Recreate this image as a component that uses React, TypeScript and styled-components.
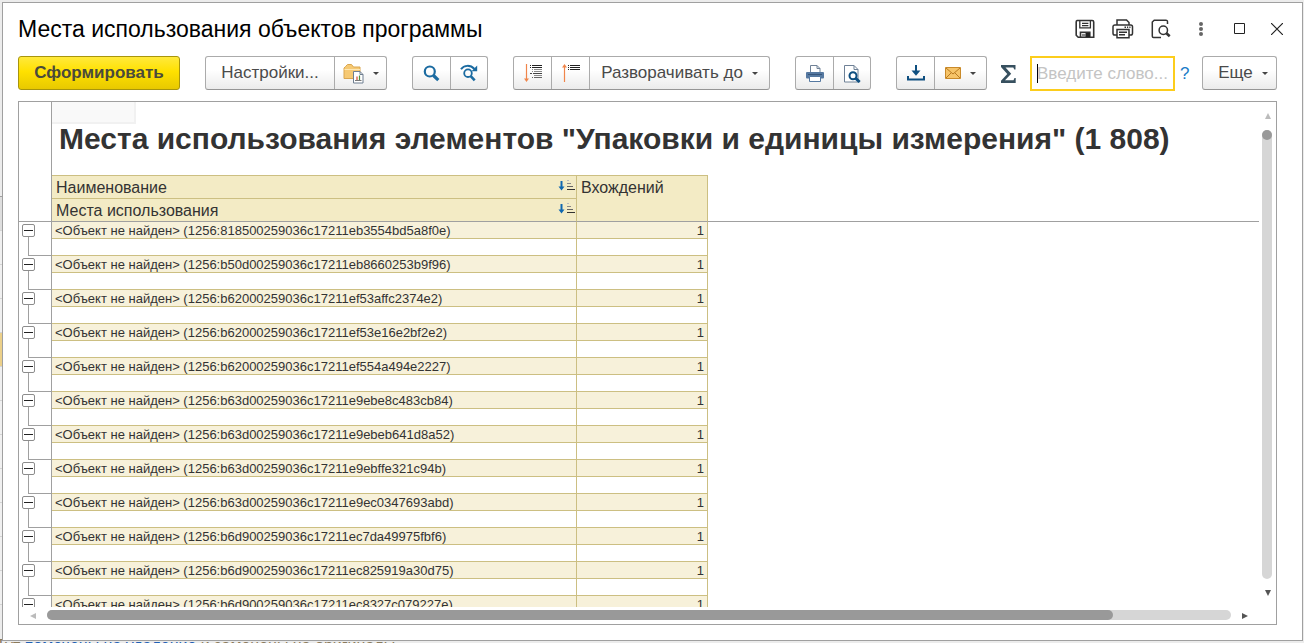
import React from "react";
import styled, { createGlobalStyle, css } from "styled-components";

const LINE = "#a0a0a0";
const GOLD = "#ccbf82";

const GlobalStyle = createGlobalStyle`
  * { box-sizing: border-box; }
  body {
    margin: 0;
    background: #ececec;
    color: #333;
    font-family: "Liberation Sans", Arial, sans-serif;
  }
  button, input { font: inherit; color: inherit; margin: 0; }
`;

/* ---------- page behind the dialog ---------- */

const Page = styled.div`
  position: relative;
  height: 100vh;
  min-height: 320px;
  display: flex;
  padding: 2px 1px 2px 2px;
  overflow: hidden;
`;

const Backdrop = styled.div`
  position: absolute;
  inset: 0;
  display: flex;
  flex-direction: column;
  overflow: hidden;
`;

const BackHead = styled.div`
  flex: none;
  width: 50%;
  height: 197px;
  border-bottom: 1px solid ${LINE};
`;

const BackRow = styled.div<{ $tone?: string }>`
  flex: none;
  width: 50%;
  height: 34px;
  border-bottom: 1px solid #d4d4d4;
  background: ${(p) => p.$tone ?? "#f0f0f0"};
`;

const BackNote = styled.p`
  position: absolute;
  left: -4px;
  bottom: -13px;
  margin: 0;
  font-size: 16px;
  line-height: 20px;
  white-space: nowrap;
  color: #8a7a5c;
`;

const BackLink = styled.span`
  color: #1f5fb4;
`;

/* ---------- dialog ---------- */

const Dialog = styled.section`
  position: relative;
  flex: 1;
  min-width: 0;
  display: flex;
  flex-direction: column;
  padding-bottom: 15px;
  background: #fff;
  border: 1px solid ${LINE};
`;

const TitleBar = styled.header`
  display: flex;
  align-items: center;
  height: 53px;
  padding: 0 6px 2px 15px;
`;

const Title = styled.h1`
  flex: 1;
  margin: 0;
  font-size: 23px;
  line-height: 28px;
  font-weight: 400;
  color: #000;
  white-space: nowrap;
`;

const WindowTools = styled.div`
  display: flex;
  gap: 2px;
`;

const ToolSet = styled.div`
  display: flex;
`;

const WindowButton = styled.button`
  width: 38px;
  height: 32px;
  display: flex;
  align-items: center;
  justify-content: center;
  padding: 0;
  border: 0;
  background: none;
`;

const Toolbar = styled.div`
  display: flex;
  align-items: flex-start;
  gap: 25px;
  height: 35px;
  padding: 0 25px 0 15px;
  font-size: 17px;
  color: #4a4a4a;

  > * { flex-shrink: 0; }
`;

const buttonFace = css`
  height: 34px;
  border: 1px solid #ababab;
  border-bottom-color: #959595;
  border-radius: 3px;
  background: linear-gradient(#fff 0%, #fff 40%, #ebebeb 100%);
`;

const RunButton = styled.button`
  width: 162px;
  height: 34px;
  padding: 0;
  border: 1px solid #a8950c;
  border-radius: 3px;
  background: linear-gradient(#ffe93c 0%, #ffe100 45%, #e8c900 100%);
  font-weight: 700;
  color: #4a4a3c;
`;

const Group = styled.div`
  ${buttonFace}
  display: flex;
`;

const GroupButton = styled.button<{ $w: number }>`
  width: ${(p) => p.$w}px;
  display: flex;
  align-items: center;
  justify-content: center;
  gap: 9px;
  padding: 0;
  border: 0;
  background: none;
  white-space: nowrap;

  & + & { border-left: 1px solid #ababab; }
`;

const MoreButton = styled.button`
  ${buttonFace}
  width: 75px;
  margin-left: auto;
  display: flex;
  align-items: center;
  justify-content: center;
  gap: 9px;
  padding: 0 0 0 6px;
`;

const Caret = styled.span`
  border: 3px solid transparent;
  border-top-color: #444;
  border-bottom: 0;
`;

const SearchArea = styled.div`
  display: flex;
  align-items: center;
  margin: 0 -12px 0 -11px;
`;

const SumButton = styled.button`
  width: 16px;
  height: 34px;
  display: flex;
  align-items: center;
  margin-right: 13px;
  padding: 0;
  border: 0;
  background: none;
`;

const SearchBox = styled.label`
  display: flex;
  align-items: center;
  width: 145px;
  height: 35px;
  padding-left: 5px;
  border: 2px solid #fccd1c;
  background: #fff;
`;

const TextCursor = styled.span`
  flex: none;
  width: 1px;
  height: 19px;
  margin-right: -1px;
  background: #000;
`;

const SearchInput = styled.input`
  flex: 1;
  min-width: 0;
  padding: 0;
  border: 0;
  outline: 0;
  background: none;
  &::placeholder { color: #c4c4c4; opacity: 1; }
`;

const HelpLink = styled.a`
  margin-left: 5px;
  color: #1a7cc8;
  text-decoration: none;
`;

/* ---------- report ---------- */

const Pane = styled.div`
  flex: 1;
  min-height: 0;
  display: grid;
  grid-template-columns: minmax(0, 1fr) 17px;
  grid-template-rows: minmax(0, 1fr) 17px;
  margin: 10px 25px 0 15px;
  border: 1px solid ${LINE};
`;

const Sheet = styled.div`
  overflow: hidden;
`;

const Report = styled.table`
  width: 100%;
  table-layout: fixed;
  border-collapse: separate;
  border-spacing: 0;
  font-size: 13px;
  line-height: 15px;
`;

const Gutter = styled.td<{ $ruled?: boolean }>`
  padding: 0;
  vertical-align: top;
  border-right: 1px solid ${LINE};
  border-bottom: ${(p) => (p.$ruled ? `1px solid ${LINE}` : "0")};
`;

const HeadingCell = styled.td`
  height: 73px;
  padding: 0;
  vertical-align: top;
`;

const ActiveCell = styled.div`
  width: 84px;
  height: 22px;
  background: #f9f9f9;
  border: solid #f1f1f1;
  border-width: 0 2px 2px 0;
`;

const ReportTitle = styled.h2`
  margin: -4px 0 0 7px;
  font-size: 30px;
  line-height: 38px;
  font-weight: 700;
  white-space: nowrap;
`;

const HeadCell = styled.th<{ $last?: boolean }>`
  height: 23px;
  padding: 1px 0 0 4px;
  vertical-align: top;
  text-align: left;
  font-size: 16px;
  line-height: 21px;
  font-weight: 400;
  background: #f3ebc5;
  border-top: 1px solid ${GOLD};
  border-right: 1px solid ${GOLD};
  border-bottom: ${(p) => (p.$last ? `1px solid ${LINE}` : "0")};
`;

const HeadLabel = styled.div`
  display: flex;
  justify-content: space-between;
  align-items: flex-start;
  height: 21px;
  padding-right: 1px;

  svg { margin-top: 3px; }
`;

const RuleCell = styled.td`
  padding: 0;
  border-bottom: 1px solid ${LINE};
`;

const Cell = styled.td<{ $fill?: boolean; $num?: boolean }>`
  height: 17px;
  padding: 1px 3px 0;
  white-space: nowrap;
  text-align: ${(p) => (p.$num ? "right" : "left")};
  background: ${(p) => (p.$fill ? "#f7f1da" : "#fff")};
  border-right: 1px solid ${GOLD};
  border-bottom: 1px solid ${GOLD};
`;

const Toggle = styled.button`
  display: flex;
  align-items: center;
  justify-content: center;
  width: 13px;
  height: 13px;
  margin: 2px 0 0 3px;
  padding: 0;
  border: 1px solid #8c8c8c;
  border-radius: 2px;
  background: #fff;

  &::before {
    content: "";
    width: 9px;
    height: 1px;
    background: #222;
  }
`;

const Branch = styled.div`
  height: 19px;
  margin-left: 9px;
  border: solid ${LINE};
  border-width: 0 0 1px 1px;
`;

/* ---------- scroll bars ---------- */

const ScrollBar = styled.div<{ $vertical?: boolean }>`
  display: flex;
  flex-direction: ${(p) => (p.$vertical ? "column" : "row")};
  align-items: center;
`;

const ScrollArrow = styled.button`
  flex: none;
  width: 16px;
  height: 28px;
  display: flex;
  align-items: center;
  justify-content: center;
  padding: 0;
  border: 0;
  background: none;
`;

const SideArrow = styled(ScrollArrow)`
  width: 28px;
  height: 16px;
`;

const Track = styled.div<{ $vertical?: boolean }>`
  flex: 1;
  display: flex;
  width: ${(p) => (p.$vertical ? "10px" : "auto")};
  height: ${(p) => (p.$vertical ? "auto" : "10px")};
  margin: ${(p) => (p.$vertical ? "0 1px 0 0" : "0 0 1px")};
  border-radius: 5px;
  background: #d6d6d6;
`;

const Thumb = styled.div<{ $vertical?: boolean }>`
  width: ${(p) => (p.$vertical ? "10px" : "90%")};
  height: 10px;
  border-radius: 5px;
  background: #999;
`;

/* ---------- icons ---------- */

const SaveIcon = () => (
  <svg width="20" height="20" viewBox="0 0 20 20" fill="none" stroke="#333" strokeWidth="1.6">
    <path d="M2.200 1.500h15a1.500 1.500 0 0 1 1.500 1.500v15.200H3.200l-2-2V3a1.500 1.500 0 0 1 1-1.500z" />
    <path d="M4.800 1.500v7.400h10.600V1.500M7 4.300h6.400M7 6.600h6.400" strokeWidth="1.300" />
    <path d="M5.500 18v-4.700h9.300V18" />
    <path d="M7 14.800h3.500V18H7z" fill="#888" stroke="none" />
    <path d="M10.500 14h4.300v4h-4.300z" fill="#222" stroke="none" />
  </svg>
);

const PrintOutlineIcon = () => (
  <svg width="22" height="20" viewBox="0 0 22 20" fill="none" stroke="#333" strokeWidth="1.500">
    <path d="M5 6V1h9.500L17 3.500V6" />
    <path d="M5 16H2.800A1.800 1.800 0 0 1 1 14.200V7.800A1.800 1.800 0 0 1 2.800 6h15.900a1.800 1.800 0 0 1 1.800 1.800v6.400a1.800 1.800 0 0 1-1.800 1.800H17" />
    <path d="M5 10.500h12v8.200H5zM7 13.200h8M7 15.800h6" />
    <path d="M12.500 8.300h1.500M15 8.300h1.200M17.300 8.300h1.200" />
  </svg>
);

const PreviewOutlineIcon = () => (
  <svg width="20" height="20" viewBox="0 0 20 20" fill="none" stroke="#333" strokeWidth="1.500">
    <path d="M10 18.500H2.500A1.200 1.200 0 0 1 1.300 17.300V3L3.200 1.200h11.500A1.500 1.500 0 0 1 16.500 2.700V5" />
    <circle cx="12.300" cy="11.300" r="4.200" />
    <path d="M15.400 14.200l3.300 3" strokeWidth="2.600" />
  </svg>
);

const DotsIcon = () => (
  <svg width="4" height="14" viewBox="0 0 4 14" fill="#666">
    <circle cx="2" cy="2" r="2" />
    <circle cx="2" cy="7" r="2" />
    <circle cx="2" cy="12" r="2" />
  </svg>
);

const MaximizeIcon = () => (
  <svg width="11" height="11" viewBox="0 0 11 11" fill="none" stroke="#222">
    <path d="M.5.5h10v10H.5z" />
  </svg>
);

const CloseIcon = () => (
  <svg width="12" height="12" viewBox="0 0 12 12" stroke="#222" strokeWidth="1.200">
    <path d="M0 0l12 12M12 0L0 12" />
  </svg>
);

const FolderReportIcon = () => (
  <svg width="21" height="21" viewBox="0 0 21 21">
    <path d="M1 15.500V5L2.500 3.500 4.500 1.500h4l2 2.500H17v11.500z" fill="#f6c973" stroke="#d9a650" />
    <path d="M1.500 6.500H17" stroke="#fde7b4" />
    <path d="M10.500 8.500h6.500l3 3v8.500h-9.500z" fill="#fff" stroke="#6f7f91" />
    <path d="M17 8.500v3h3" fill="none" stroke="#6f7f91" />
    <path d="M14 13.500v3.500" stroke="#d9482b" strokeWidth="1.200" />
    <path d="M16.500 12.500v4.500" stroke="#48913c" strokeWidth="1.200" />
    <path d="M12 17.500h6.500" stroke="#777" />
  </svg>
);

const SearchIcon = () => (
  <svg width="17" height="17" viewBox="0 0 17 17" fill="none" stroke="#1b6ba1">
    <circle cx="6.800" cy="6.500" r="5" strokeWidth="2.200" />
    <path d="M10.500 10.500l4.800 4.700" strokeWidth="3.200" />
  </svg>
);

const SearchNextIcon = () => (
  <svg width="18" height="18" viewBox="0 0 18 18" fill="none" stroke="#1b6ba1">
    <path d="M1 5.200C4 .8 10.500.8 14.500 5" strokeWidth="2" />
    <path d="M17.200 1.500v5.700h-5.700z" fill="#1b6ba1" stroke="none" />
    <circle cx="8" cy="9.200" r="3.800" strokeWidth="1.800" />
    <path d="M10.700 12.200l4 4.200" strokeWidth="2.600" />
  </svg>
);

const ExpandIcon = () => (
  <svg width="18" height="20" viewBox="0 0 18 20">
    <path d="M2.500 1v15" stroke="#f0854a" strokeWidth="1.200" />
    <path d="M0 15.500h5L2.500 19z" fill="#f0854a" />
    <path d="M6 2.500h1M8 2.500h10M6 4.500h1M8 4.500h10" stroke="#222" />
    <path d="M8 6.500h1M10 6.500h8M8 8.500h1M10 8.500h8M10 12.500h8" stroke="#888" />
    <path d="M6 10.500h2M9 10.500h9" stroke="#444" />
    <path d="M8 14.500h1M10 14.500h8" stroke="#666" />
  </svg>
);

const CollapseIcon = () => (
  <svg width="18" height="20" viewBox="0 0 18 20">
    <path d="M2.500 4v15" stroke="#f0854a" strokeWidth="1.200" />
    <path d="M0 4.500h5L2.500 1z" fill="#f0854a" />
    <path d="M6 2.500h1M8 2.500h10M6 4.500h1M8 4.500h10M6 6.500h1M8 6.500h10" stroke="#222" />
  </svg>
);

const PrintIcon = () => (
  <svg width="18" height="19" viewBox="0 0 18 19">
    <path d="M4.500 9V1.500h6.500l3 3V9z" fill="#fff" stroke="#6f8196" />
    <path d="M11 1.500v3h3" fill="none" stroke="#6f8196" />
    <rect x="0" y="8" width="18" height="6.500" rx="1" fill="#5578a0" />
    <path d="M2 10.500h14" stroke="#36557a" />
    <path d="M3.500 12.500h11v5h-11z" fill="#fff" stroke="#5578a0" />
  </svg>
);

const PreviewIcon = () => (
  <svg width="18" height="19" viewBox="0 0 18 19" fill="none">
    <path d="M1.500 1.500h9.500l4 4V18H1.500z" fill="#fff" stroke="#6f8196" />
    <path d="M11 1.500v4h4" stroke="#6f8196" />
    <circle cx="10" cy="11.800" r="3.500" fill="#fff" stroke="#0e4f80" strokeWidth="2" />
    <path d="M12.700 14.400l4 3.700" stroke="#0e4f80" strokeWidth="2.800" />
  </svg>
);

const DownloadIcon = () => (
  <svg width="18" height="16" viewBox="0 0 18 16" fill="none" stroke="#0e4f80">
    <path d="M9 0v7" strokeWidth="2" />
    <path d="M4.500 5.500h9L9 10.800z" fill="#0e4f80" stroke="none" />
    <path d="M1 11v3.500h16V11" strokeWidth="2" />
  </svg>
);

const MailIcon = () => (
  <svg width="16" height="12" viewBox="0 0 16 12">
    <path d="M.5.5h15v11H.5z" fill="#f6c469" stroke="#c98a2a" />
    <path d="M1 1l7 6 7-6M1 11l5-5M15 11l-5-5" fill="none" stroke="#b97a20" />
  </svg>
);

const SigmaIcon = () => (
  <svg width="16" height="18" viewBox="0 0 16 18">
    <path d="M0 0h14.500v4.500h-1.200L12.300 2.500H4.500l5.700 6.200L4 15.200h8.500l1-2.200h1.200v5H0v-2.200l6.300-6.800L0 2z" fill="#37505f" />
  </svg>
);

const SortIcon = () => (
  <svg width="17" height="12" viewBox="0 0 17 12">
    <path d="M3.500 1v6" stroke="#1068b0" strokeWidth="2" />
    <path d="M0.500 6.500h6L3.500 10.500z" fill="#1068b0" />
    <path d="M9 0.500h2" stroke="#bbb" />
    <path d="M9 3.500h4" stroke="#888" />
    <path d="M9 6.500h6" stroke="#666" />
    <path d="M9 9.500h8" stroke="#333" />
  </svg>
);

const ArrowGlyph = ({ d, color }: { d: string; color: string }) => (
  <svg width="6" height="6" viewBox="0 0 6 6">
    <path d={d} fill={color} />
  </svg>
);

/* ---------- data ---------- */

const rows = [
  "818500259036c17211eb3554bd5a8f0e",
  "b50d00259036c17211eb8660253b9f96",
  "b62000259036c17211ef53affc2374e2",
  "b62000259036c17211ef53e16e2bf2e2",
  "b62000259036c17211ef554a494e2227",
  "b63d00259036c17211e9ebe8c483cb84",
  "b63d00259036c17211e9ebeb641d8a52",
  "b63d00259036c17211e9ebffe321c94b",
  "b63d00259036c17211e9ec0347693abd",
  "b6d900259036c17211ec7da49975fbf6",
  "b6d900259036c17211ec825919a30d75",
  "b6d900259036c17211ec8327c079227e",
];

const backTones = ["#dedede", undefined, undefined, undefined, "#ecd089"];

export default function App() {
  return (
    <Page>
      <GlobalStyle />
      <Backdrop aria-hidden="true">
        <BackHead />
        {Array.from({ length: 12 }, (_, i) => (
          <BackRow key={i} $tone={backTones[i]} />
        ))}
        <BackNote>
          Тут <BackLink>помечены на удаление</BackLink> и заменены на оригиналы
        </BackNote>
      </Backdrop>

      <Dialog>
        <TitleBar>
          <Title>Места использования объектов программы</Title>
          <WindowTools>
            <ToolSet>
              <WindowButton aria-label="Сохранить"><SaveIcon /></WindowButton>
              <WindowButton aria-label="Печать"><PrintOutlineIcon /></WindowButton>
              <WindowButton aria-label="Просмотр"><PreviewOutlineIcon /></WindowButton>
            </ToolSet>
            <ToolSet>
              <WindowButton aria-label="Меню"><DotsIcon /></WindowButton>
              <WindowButton aria-label="Развернуть"><MaximizeIcon /></WindowButton>
              <WindowButton aria-label="Закрыть"><CloseIcon /></WindowButton>
            </ToolSet>
          </WindowTools>
        </TitleBar>

        <Toolbar>
          <RunButton>Сформировать</RunButton>
          <Group>
            <GroupButton $w={128}>Настройки...</GroupButton>
            <GroupButton $w={52} aria-label="Варианты отчета">
              <FolderReportIcon />
              <Caret />
            </GroupButton>
          </Group>
          <Group>
            <GroupButton $w={37} aria-label="Найти"><SearchIcon /></GroupButton>
            <GroupButton $w={37} aria-label="Найти далее"><SearchNextIcon /></GroupButton>
          </Group>
          <Group>
            <GroupButton $w={37} aria-label="Развернуть все"><ExpandIcon /></GroupButton>
            <GroupButton $w={38} aria-label="Свернуть все"><CollapseIcon /></GroupButton>
            <GroupButton $w={180}>
              Разворачивать до
              <Caret />
            </GroupButton>
          </Group>
          <Group>
            <GroupButton $w={37} aria-label="Печать"><PrintIcon /></GroupButton>
            <GroupButton $w={37} aria-label="Просмотр"><PreviewIcon /></GroupButton>
          </Group>
          <Group>
            <GroupButton $w={37} aria-label="Сохранить"><DownloadIcon /></GroupButton>
            <GroupButton $w={52} aria-label="Отправить">
              <MailIcon />
              <Caret />
            </GroupButton>
          </Group>
          <SearchArea>
            <SumButton aria-label="Сумма"><SigmaIcon /></SumButton>
            <SearchBox>
              <TextCursor />
              <SearchInput type="text" placeholder="Введите слово..." aria-label="Поиск" />
            </SearchBox>
            <HelpLink href="#help">?</HelpLink>
          </SearchArea>
          <MoreButton>
            Еще
            <Caret />
          </MoreButton>
        </Toolbar>

        <Pane>
          <Sheet>
            <Report>
              <colgroup>
                <col style={{ width: 33 }} />
                <col style={{ width: 525 }} />
                <col style={{ width: 131 }} />
                <col />
              </colgroup>
              <thead>
                <tr>
                  <Gutter />
                  <HeadingCell colSpan={3}>
                    <ActiveCell />
                    <ReportTitle>
                      Места использования элементов "Упаковки и единицы измерения" (1 808)
                    </ReportTitle>
                  </HeadingCell>
                </tr>
                <tr>
                  <Gutter rowSpan={2} $ruled />
                  <HeadCell>
                    <HeadLabel>Наименование<SortIcon /></HeadLabel>
                  </HeadCell>
                  <HeadCell rowSpan={2} $last>Вхождений</HeadCell>
                  <RuleCell rowSpan={2} />
                </tr>
                <tr>
                  <HeadCell $last>
                    <HeadLabel>Места использования<SortIcon /></HeadLabel>
                  </HeadCell>
                </tr>
              </thead>
              <tbody>
                {rows.map((id) => (
                  <React.Fragment key={id}>
                    <tr>
                      <Gutter rowSpan={2}>
                        <Toggle aria-label="Свернуть" />
                        <Branch />
                      </Gutter>
                      <Cell $fill>{`<Объект не найден> (1256:${id})`}</Cell>
                      <Cell $fill $num>1</Cell>
                    </tr>
                    <tr>
                      <Cell />
                      <Cell />
                    </tr>
                  </React.Fragment>
                ))}
              </tbody>
            </Report>
          </Sheet>
          <ScrollBar $vertical>
            <ScrollArrow aria-label="Вверх"><ArrowGlyph d="M0 6L3 0l3 6z" color="#bbb" /></ScrollArrow>
            <Track $vertical><Thumb $vertical /></Track>
            <ScrollArrow aria-label="Вниз"><ArrowGlyph d="M0 0h6L3 6z" color="#555" /></ScrollArrow>
          </ScrollBar>
          <ScrollBar>
            <SideArrow aria-label="Влево"><ArrowGlyph d="M6 0v6L0 3z" color="#bbb" /></SideArrow>
            <Track><Thumb /></Track>
            <SideArrow aria-label="Вправо"><ArrowGlyph d="M0 0l6 3-6 3z" color="#555" /></SideArrow>
          </ScrollBar>
        </Pane>
      </Dialog>
    </Page>
  );
}
